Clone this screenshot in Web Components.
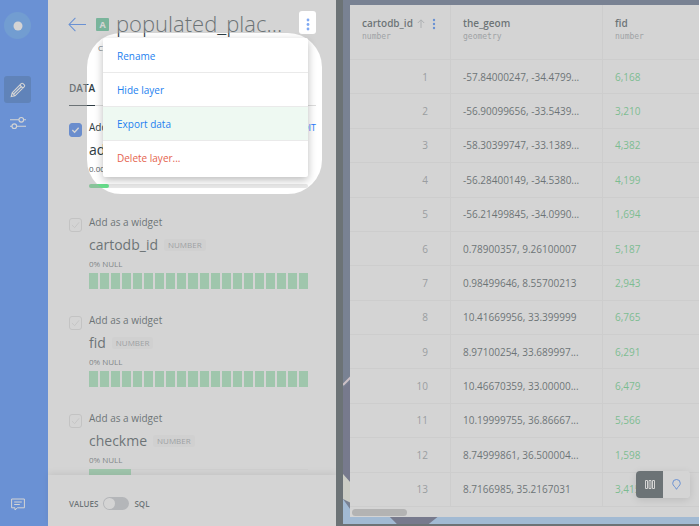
<!DOCTYPE html>
<html lang="en">
<head>
<meta charset="utf-8">
<title>Layer data</title>
<style>
html, body { margin: 0; height: 100%; }
body { font-family: "Open Sans", "Noto Sans", sans-serif; color: #2e3c43; overflow: hidden; }
</style>
</head>
<body>
<layer-app></layer-app>
<script>
const define = (name, html, setup) => customElements.define(name, class extends HTMLElement {
  connectedCallback() {
    if (this.shadowRoot) return;
    const root = this.attachShadow({ mode: "open" });
    root.innerHTML = typeof html === "function" ? html(this) : html;
    if (setup) setup(this, root);
  }
});

define("side-nav", `
<style>
:host { width: 48px; flex: none; background: #2b79ff; display: flex; flex-direction: column; align-items: flex-start; padding: 12px 4px 8px; box-sizing: border-box; }
button { border: 0; background: none; padding: 0; width: 27px; height: 27px; display: grid; place-items: center; color: #fff; }
.logo { border-radius: 50%; background: #3a90f8; margin-bottom: 37px; }
.on { background: #165dc8; border-radius: 3px; margin-bottom: 6px; }
.grow { flex: 1; }
svg { display: block; fill: none; stroke: #fff; }
</style>
<button class="logo" aria-label="Home"><svg width="10" height="10"><circle cx="5" cy="5" r="4.5" fill="#fff" stroke="none"/></svg></button>
<button class="on" aria-label="Edit"><svg width="16" height="16" viewBox="0 0 16 16" stroke-width="1.1"><path d="M1.2 14.6 2.2 10.8 11.2 1.6Q12.100.8 13 1.6L14.300 2.900Q15.100 3.800 14.300 4.700L5 13.800ZM9.800 3l3.200 3.200M2.200 10.800 5 13.800M3.800 12 11.400 4.500"/></svg></button>
<button aria-label="Settings"><svg width="16" height="14" viewBox="0 0 16 14" stroke-width="1.1"><path d="M0 3.800h9M13.600 3.800H16M0 10.200h2M6.600 10.200H16"/><circle cx="11.300" cy="3.800" r="2.300"/><circle cx="4.300" cy="10.200" r="2.300"/></svg></button>
<div class="grow"></div>
<button aria-label="Comments"><svg width="14" height="13" viewBox="0 0 14 13"><path d="M.6 1h12.800v8.800H6.400L4 12V9.800H.6ZM3.200 4h7.600M3.200 6.500h5.600"/></svg></button>
`);

define("null-bars", el => `
<style>
:host { display: grid; grid-template-columns: repeat(20, 1fr); gap: 2px; height: 16px; }
i { background: #95e3af; }
</style>${"<i></i>".repeat(20)}`);

define("ratio-bar", el => `
<style>
:host { display: block; height: ${el.getAttribute("height")}px; background: ${el.getAttribute("track")}; border-radius: ${el.getAttribute("round")}px; }
:host([slim]) { margin: 9px 0 3px; }
i { display: block; height: 100%; width: ${el.getAttribute("value")}%; background: ${el.getAttribute("fill")}; border-radius: inherit; }
</style><i></i>`);

define("widget-field", el => `
<style>
:host { display: grid; grid-template-columns: 13px 1fr; column-gap: 7px; padding-right: 8px; flex: none; }
input { appearance: none; margin: 4px 0 0; width: 13px; height: 14px; box-sizing: border-box; border: 1px solid #dcdcdc; border-radius: 3px;
  background: center / 9px 8px no-repeat url("data:image/svg+xml,%3Csvg xmlns='http://www.w3.org/2000/svg' viewBox='0 0 10 8'%3E%3Cpath d='M1 4l3 3 5-6' fill='none' stroke='%23dedede'/%3E%3C/svg%3E"); }
input:checked { background-color: #2a70f0; border-color: #2a70f0; background-image: url("data:image/svg+xml,%3Csvg xmlns='http://www.w3.org/2000/svg' viewBox='0 0 10 8'%3E%3Cpath d='M1.5 4l2.5 2.5 4.5-5' fill='none' stroke='white' stroke-width='1.5'/%3E%3C/svg%3E"); }
label { font-size: 10px; line-height: 17px; }
.top { display: flex; justify-content: space-between; margin-right: -8px; }
a { font-size: 9px; line-height: 17px; color: #2a79fd; text-decoration: none; }
h3 { margin: 4px 0 0; font-size: 14px; line-height: 20px; font-weight: 400; display: flex; align-items: center; gap: 6px; }
.tag { font-size: 8px; line-height: 12px; padding: 0 4px; color: #90969b; background: #f7f7f7; border-radius: 2px; }
p { margin: 3px 0; font-size: 8px; line-height: 12px; color: #545e64; }
</style>
<input type="checkbox" id="w" ${el.hasAttribute("on") ? "checked" : ""}>
<div>
<div class="top"><label for="w">Add as a widget</label>${el.hasAttribute("on") ? '<a href="#">EDIT</a>' : ""}</div>
<h3>${el.getAttribute("name")}<span class="tag">NUMBER</span></h3>
<p>${el.getAttribute("nulls")} NULL</p>
<slot></slot>
</div>`);

define("layer-panel", `
<style>
:host { flex: none; width: 288px; background: #fff; display: flex; flex-direction: column; min-height: 0; }
.head { display: flex; align-items: center; padding: 8px 20px 0; height: 32px; }
.back { border: 0; background: none; padding: 0; width: 18px; height: 15px; margin-right: 10px; }
.badge { width: 13px; height: 13px; background: #48bf8d; color: #fff; border-radius: 1px; font-size: 9px; line-height: 13px; font-weight: 700; text-align: center; margin-right: 7px; }
h1 { flex: 1; margin: 0; font-size: 22px; line-height: 30px; padding-bottom: 2px; font-weight: 300; white-space: nowrap; }
svg { display: block; }
.sub { font-size: 8px; line-height: 12px; padding-left: 50px; margin-top: 2px; color: #747c81; }
.tabs { display: flex; margin: 26px 20px 0 21px; border-bottom: 1px solid #ddd; }
.tabs button { border: 0; background: none; padding: 1px 0 10px; font: 600 10px/14px "Open Sans", sans-serif; color: #2e3c43; height: 25px; box-shadow: 0 1px #2e3c43; }
.list { flex: 1; min-height: 0; overflow: hidden; padding: 13px 20px 0 21px; display: flex; flex-direction: column; gap: 23px; }
footer { position: relative; box-sizing: border-box; height: 51px; flex: none; display: flex; align-items: center; gap: 5px; padding: 5px 21px 0; font-size: 8px; font-weight: 600; box-shadow: 0 -2px 7px #0002; background: #fff; }
footer input { appearance: none; margin: 0; width: 26px; height: 13px; border-radius: 7px; background: #bec2c8; display: flex; }
footer input::before { content: ""; width: 11px; height: 11px; margin: 1px; border-radius: 50%; background: #fff; }
</style>
<div class="head">
<button class="back" aria-label="Back"><svg width="18" height="15" viewBox="0 0 17 14" fill="none" stroke="#2a79fd"><path d="M17 7H1M7 .8 1 7l6 6.200"/></svg></button>
<span class="badge">A</span><h1>populated_plac...</h1>
</div>
<div class="sub">CARTO</div>
<div class="tabs" role="tablist"><button role="tab" aria-selected="true">DATA</button></div>
<div class="list">
<widget-field on name="adm0cap" nulls="0.00%"><ratio-bar slim height="4" track="#e8e8e8" fill="#67dd8b" round="2" value="9"></ratio-bar></widget-field>
<widget-field name="cartodb_id" nulls="0%"><null-bars></null-bars></widget-field>
<widget-field name="fid" nulls="0%"><null-bars></null-bars></widget-field>
<widget-field name="checkme" nulls="0%"><ratio-bar height="16" track="linear-gradient(#f6f6f6 1px,transparent 1px)" fill="#95e3af" round="0" value="19"></ratio-bar></widget-field>
</div>
<footer><label for="mode">VALUES</label><input type="checkbox" role="switch" id="mode"><span>SQL</span></footer>
`);

define("data-grid", `
<style>
:host { flex: 1; min-width: 0; display: flex; flex-direction: column; background: #fff; box-sizing: border-box; overflow: hidden; }
.rows { flex: 1; min-height: 0; overflow: hidden; }
table { border-collapse: separate; border-spacing: 0; table-layout: fixed; width: 100%; height: 100%; font-size: 10px; }
th { font-weight: 600; text-align: left; height: 55px; box-sizing: border-box; padding: 11px 12px 0; vertical-align: top; line-height: 15px; border-bottom: 1px solid #f0f0f0; border-right: 1px solid #f0f0f0; }
th small { display: block; font: 8px/12px "DejaVu Sans Mono", monospace; color: #92999e; }
th div { display: flex; align-items: center; }
td { padding: 0 12px; border-bottom: 1px solid #f0f0f0; border-right: 1px solid #f0f0f0; white-space: nowrap; }
td:first-child { text-align: right; padding-right: 22px; color: #8a9196; }
td:last-child { color: #4fcf79; }
td:last-child, th:last-child { border-right: 0; }
button { flex: none; border: 0; padding: 0; background: none; margin-left: 7px; height: 12px; }
svg { display: block; flex: none; }
.sort { margin-left: 4px; }
.bar { flex: none; height: 10px; display: flex; align-items: center; padding: 0 2px; }
.bar i { width: 55px; height: 7px; border-radius: 4px; background: #bcbcbc; }
</style>
<div class="rows"><table>
<colgroup><col style="width:101px"><col style="width:152px"><col></colgroup>
<thead><tr>
<th><div>cartodb_id<svg class="sort" width="8" height="9" viewBox="0 0 8 9" fill="none" stroke="#b0b6ba"><path d="M4 9V1M.8 4 4 .8 7.200 4"/></svg><button aria-label="Column options"><svg width="4" height="12" fill="#2a79fd"><circle cx="2" cy="2" r="1.200"/><circle cx="2" cy="6" r="1.200"/><circle cx="2" cy="10" r="1.200"/></svg></button></div><small>number</small></th>
<th>the_geom<small>geometry</small></th><th>fid<small>number</small></th></tr></thead>
<tbody></tbody></table></div>
<div class="bar"><i></i></div>
`, (el, root) => {
  const rows = [["-57.84000247, -34.4799...","6,168"],["-56.90099656, -33.5439...","3,210"],["-58.30399747, -33.1389...","4,382"],["-56.28400149, -34.5380...","4,199"],["-56.21499845, -34.0990...","1,694"],["0.78900357, 9.26100007","5,187"],["0.98499646, 8.55700213","2,943"],["10.41669956, 33.399999","6,765"],["8.97100254, 33.689997...","6,291"],["10.46670359, 33.00000...","6,479"],["10.19999755, 36.86667...","5,566"],["8.74999861, 36.500004...","1,598"],["8.7166985, 35.2167031","3,415"]];
  root.querySelector("tbody").innerHTML = rows.map((r, i) => `<tr><td>${i + 1}</td><td>${r[0]}</td><td>${r[1]}</td></tr>`).join("");
});

define("view-toggle", `
<style>
:host { display: flex; border-radius: 4px; overflow: hidden; box-shadow: 0 2px 8px #0003; }
button { width: 27px; height: 27px; border: 0; padding: 0; background: #fff; display: grid; place-items: center; }
.on { background: #2e3c43; }
svg { display: block; fill: none; }
</style>
<button class="on" aria-label="Table view"><svg width="10" height="9" stroke="#fff"><path d="M.5.5h2v8h-2ZM4 .5h2v8H4ZM7.500.5h2v8h-2Z"/></svg></button>
<button aria-label="Map view"><svg width="9" height="11" viewBox="0 0 9 11" stroke="#2a79fd"><path d="M4.500 10.300C3.500 8 .7 6.500.7 4.300a3.800 3.800 0 0 1 7.600 0C8.300 6.500 5.500 8 4.500 10.300Z"/></svg></button>
`);

define("action-menu", `
<style>
:host { display: block; padding: 1px 0 2px; background: #fff; box-shadow: 0 3px 9px #0004; border-radius: 2px; font-size: 10px; }
button { display: block; width: 100%; box-sizing: border-box; height: 34px; padding: 0 14px; text-align: left; font: inherit; color: #1d7ff0; background: none; border: 0; border-bottom: 1px solid #eaeaea; }
.hot { background: #eef9f2; }
.risk { color: #e5624e; border: 0; }
</style>
<button>Rename</button><button>Hide layer</button><button class="hot">Export data</button><button class="risk">Delete layer...</button>
`);

define("layer-app", `
<style>
:host { display: flex; height: 100%; position: relative; overflow: hidden; box-sizing: border-box; border-right: 1px solid #fff; }
.map { flex: 1; min-width: 0; position: relative; display: flex; box-sizing: border-box; padding: 5px 0 9px 14px; background: #2e3c43; }
.map > svg { position: absolute; left: 7px; top: 0; width: calc(100% - 7px); height: calc(100% - 2px); }
data-grid { position: relative; }
view-toggle { position: absolute; right: 9px; bottom: 28px; }
.spot { position: absolute; left: 87px; top: 33px; width: 235px; height: 161px; border-radius: 34px; box-shadow: 0 0 0 1000px #a9a9a980; pointer-events: none; }
action-menu { position: absolute; left: 103px; top: 38px; width: 205px; }
.more { position: absolute; left: 299px; top: 11px; width: 17px; height: 23px; padding: 4px 0 0; border: 0; border-radius: 3px; background: #fff; display: grid; place-items: center; }
</style>
<side-nav></side-nav>
<layer-panel></layer-panel>
<div class="map">
<svg viewBox="0 0 357 524" preserveAspectRatio="none" fill="none"><path fill="#495a7d" d="M0 0h357v524H0Z"/><path d="M0 385 8 377" stroke="#f1d8e2" stroke-width="2"/><path fill="#454b70" d="M0 388 8 380V483L0 474Z"/><path fill="#eff0e0" d="M0 474 8 483V503L0 499Z"/><path fill="#9bcafd" d="M0 499 12 516H357V524H0Z"/><path fill="#454b70" d="M46 516H96L86 524H54Z"/></svg>
<data-grid></data-grid>
<view-toggle></view-toggle>
</div>
<div class="spot"></div>
<button class="more" aria-label="Layer options"><svg width="4" height="13" fill="#7fa9f2"><circle cx="2" cy="2" r="1.400"/><circle cx="2" cy="6.500" r="1.400"/><circle cx="2" cy="11" r="1.400"/></svg></button>
<action-menu></action-menu>
`);
</script>
</body>
</html>
